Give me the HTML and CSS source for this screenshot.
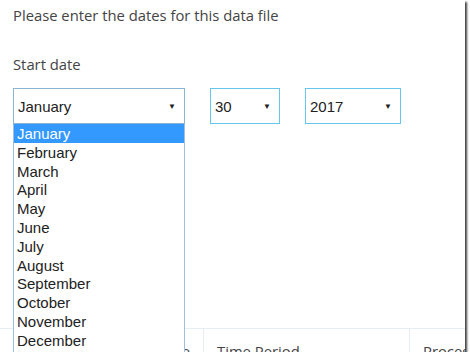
FILE: index.html
```html
<!doctype html>
<html lang="en">
  <head>
    <meta charset="UTF-8" />
    <title>Data file dates</title>
    <link rel="stylesheet" href="styles.css">
  </head>
  <body>
    <div class="frame">
      <p class="intro">Please enter the dates for this data file</p>
      <p class="label">Start date</p>

      <div class="date-row">
        <div class="picker month-picker">
          <div class="select focused">
            <span>January</span>
            <span class="arrow">&#9660;</span>
          </div>
          <ul class="options">
            <li class="selected">January</li>
            <li>February</li>
            <li>March</li>
            <li>April</li>
            <li>May</li>
            <li>June</li>
            <li>July</li>
            <li>August</li>
            <li>September</li>
            <li>October</li>
            <li>November</li>
            <li>December</li>
          </ul>
        </div>
        <div class="select day-select">
          <span>30</span>
          <span class="arrow">&#9660;</span>
        </div>
        <div class="select year-select">
          <span>2017</span>
          <span class="arrow">&#9660;</span>
        </div>
      </div>

      <div class="table-head">
        <div class="col col-first">File type</div>
        <div class="col col-period">Time Period</div>
        <div class="col col-proc">Processed</div>
      </div>
    </div>
  </body>
</html>
```

FILE: styles.css
```css
* {
  margin: 0;
  padding: 0;
  box-sizing: border-box;
}

body {
  background: #fff;
  font-family: "Open Sans", "Noto Sans", sans-serif;
  color: #333;
}

/* the captured window with its drop shadow */
.frame {
  width: 465px;
  height: 352px;
  overflow: hidden;
  background: #fff;
  box-shadow: 2px 2px 2px rgba(0, 0, 0, 0.75);
  padding: 4px 0 0 13px;
  display: flex;
  flex-direction: column;
}

.intro {
  font-size: 14.8px;
  line-height: 22px;
  color: #444;
}

.label {
  font-size: 14.8px;
  line-height: 22px;
  margin-top: 27px;
  color: #444;
}

.date-row {
  display: flex;
  gap: 25px;
  margin-top: 13px;
  height: 36px;
  flex-shrink: 0;
  position: relative;
  z-index: 2;
}

.picker {
  position: relative;
}

.select {
  height: 36px;
  border: 1px solid #66c6ee;
  display: flex;
  align-items: center;
  justify-content: space-between;
  padding: 0 8px 0 4px;
  font-family: "Liberation Sans", Arial, sans-serif;
  font-size: 15px;
  color: #222;
  background: #fff;
}

.select.focused {
  width: 172px;
  border: 1px dotted #5f8fb5;
  outline: 1px solid #8ab4d4;
  outline-offset: -1px;
}

.day-select {
  width: 70px;
}

.year-select {
  width: 96px;
}

.arrow {
  font-size: 8px;
  color: #222;
}

.options {
  position: absolute;
  top: 36px;
  left: 0;
  width: 172px;
  list-style: none;
  background: #fff;
  border: 1px solid #9fbfe0;
  border-top: none;
  padding-bottom: 3px;
  font-family: "Liberation Sans", Arial, sans-serif;
  font-size: 15px;
  color: #222;
}

.options li {
  height: 18.8px;
  line-height: 19px;
  padding-left: 3px;
}

.options li.selected {
  background: #3399ff;
  color: #fff;
}

.table-head {
  display: flex;
  flex-shrink: 0;
  margin-top: 204px;
  margin-left: -13px;
  border-top: 1px solid #e6edf4;
  font-size: 14.8px;
  color: #444;
}

.col {
  flex-shrink: 0;
  padding-top: 12px;
  height: 40px;
  white-space: nowrap;
  overflow: hidden;
}

.col-first {
  width: 203px;
  text-align: right;
  padding-right: 13px;
}

.col-period {
  width: 206px;
  border-left: 1px solid #e6edf4;
  padding-left: 13px;
}

.col-proc {
  width: 56px;
  border-left: 1px solid #e6edf4;
  padding-left: 13px;
}
```
